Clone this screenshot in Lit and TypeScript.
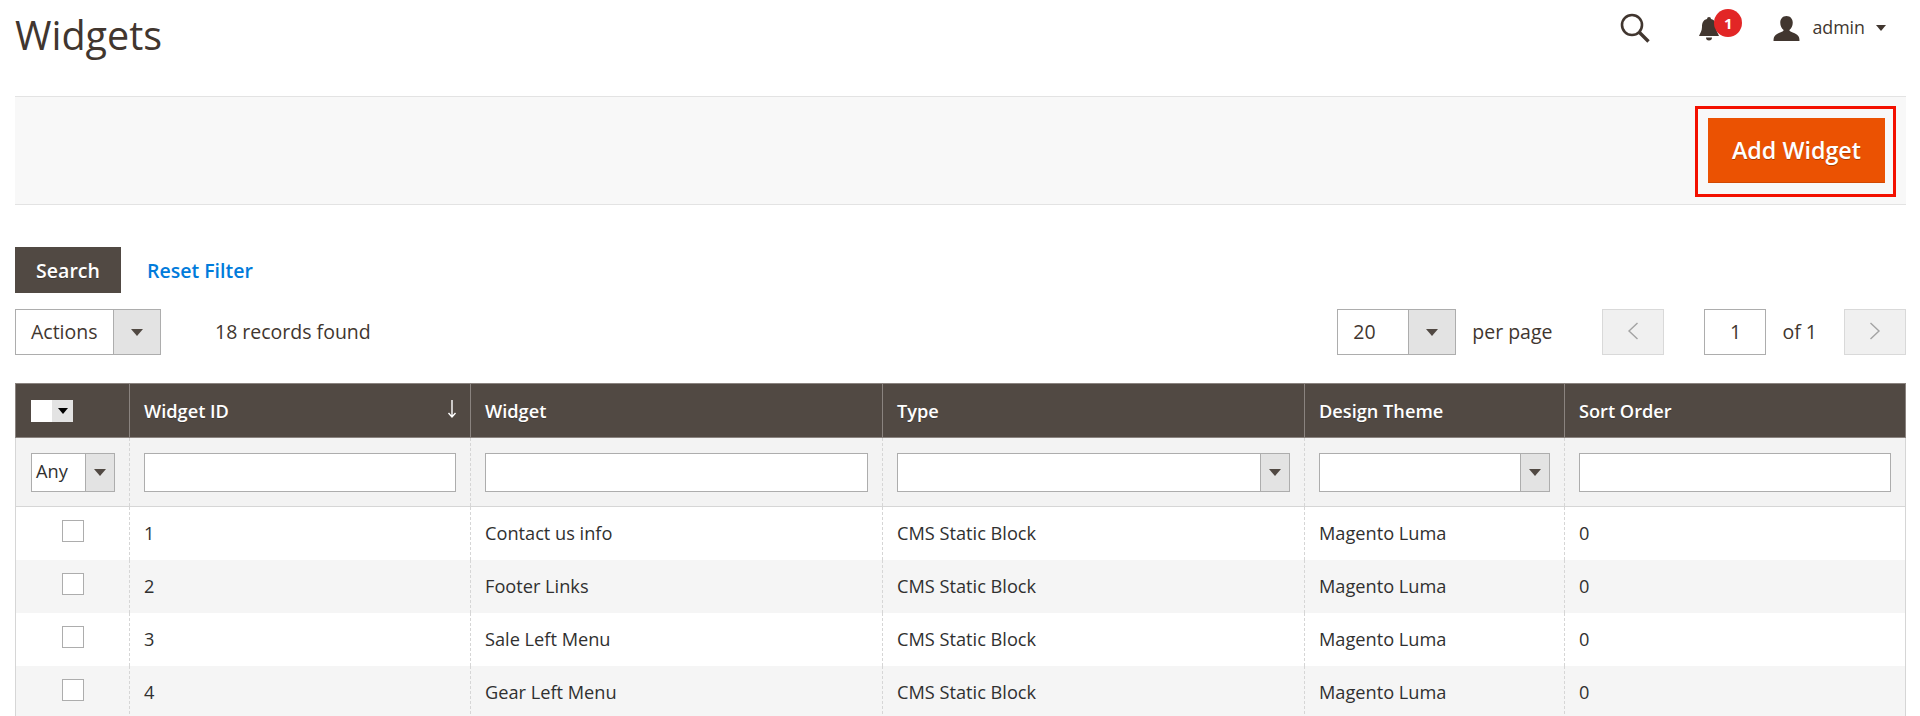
import { LitElement, html, css } from "lit";
import { customElement } from "lit/decorators.js";

const rows = [
  ["1", "Contact us info"],
  ["2", "Footer Links"],
  ["3", "Sale Left Menu"],
  ["4", "Gear Left Menu"],
];

@customElement("app-root")
export class AppRoot extends LitElement {
  static styles = css`
    :host { display: block; height: 716px; overflow: hidden; background: #fff; font-family: "Open Sans", sans-serif; color: #41362f; font-size: 19.5px; padding: 0 14px 0 15px; box-sizing: border-box; }
    .top { display: flex; justify-content: space-between; height: 96px; }
    h1 { margin: 0; font-weight: 400; font-size: 39.5px; line-height: 71px; color: #41362f; }
    .tools { display: flex; align-items: center; height: 56px; }
    .tools svg { display: block; }
    .search { margin-right: 47px; }
    .bell { position: relative; margin-right: 52px; }
    .badge { position: absolute; left: 17px; top: -7px; width: 28px; height: 28px; border-radius: 50%; background: #e22626; color: #fff; font-size: 15px; font-weight: 700; display: flex; align-items: center; justify-content: center; }
    .user { display: flex; align-items: center; margin-right: 20px; font-size: 17.8px; }
    .user span { margin: 0 11px 0 12px; padding-bottom: 2px; }
    .tri { width: 0; height: 0; border: 5px solid transparent; border-top: 6px solid #41362f; border-bottom: 0; }
    .bar { height: 109px; box-sizing: border-box; background: #f8f8f8; border-top: 1px solid #e3e3e3; border-bottom: 1px solid #e3e3e3; display: flex; justify-content: flex-end; align-items: flex-start; padding: 9px 10px 0 0; }
    .hl { border: 3px solid #f31000; padding: 9px 8px 11px 10px; display: flex; }
    .add { background: #eb5202; border: 1px solid #eb5202; border-bottom-color: #d14802; color: #fff; font: 600 23.3px "Open Sans", sans-serif; width: 177px; height: 65px; padding: 0 0 1px; text-shadow: 0 1px 0 rgba(0,0,0,.3); }
    .filters { display: flex; align-items: center; gap: 26px; margin-top: 42px; }
    .search-btn { background: #514943; color: #fff; font: 600 19.5px "Open Sans", sans-serif; border: 0; width: 106px; height: 46px; padding: 0; text-shadow: 0 1px 0 rgba(0,0,0,.3); }
    .reset { color: #007bdb; font-weight: 600; font-size: 19.5px; }
    .tb { display: flex; align-items: center; margin-top: 16px; height: 46px; }
    .sel { display: flex; height: 46px; box-sizing: border-box; border: 1px solid #adadad; background: #fff; align-items: center; }
    .sel .v { flex: 1; padding: 0 0 2px 15px; }
    .sel .arr { align-self: stretch; background: #e3e3e3; border-left: 1px solid #adadad; display: flex; align-items: center; justify-content: center; }
    .arr i { display: block; width: 0; height: 0; border: 6px solid transparent; border-top: 7px solid #514943; border-bottom: 0; }
    .actions { width: 146px; }
    .actions .arr { width: 46px; }
    .found { margin-left: 54px; padding-bottom: 2px; }
    .sp { flex: 1; }
    .pp { width: 119px; }
    .pp .arr { width: 46px; }
    .pl { margin-left: 16px; padding-bottom: 2px; }
    .pg { width: 62px; height: 46px; box-sizing: border-box; border: 1px solid #d9d9d9; background: #f0f0f0; display: flex; align-items: center; justify-content: center; padding-bottom: 2px; }
    .prev { margin-left: 50px; }
    .num { width: 62px; height: 46px; box-sizing: border-box; border: 1px solid #adadad; margin-left: 40px; display: flex; align-items: center; justify-content: center; padding-bottom: 2px; }
    .of { margin-left: 16px; margin-right: 27px; padding-bottom: 2px; }
    table { width: 100%; border-collapse: collapse; table-layout: fixed; margin-top: 28px; font-size: 18.2px; }
    th { background: #514943; color: #fff; font-weight: 600; text-align: left; height: 54px; padding: 0 14px; box-sizing: border-box; border: 1px solid #8a837f; position: relative; text-shadow: 0 1px 0 rgba(0,0,0,.25); }
    th:first-child, .f td:first-child { padding-left: 15px; }
    .f td { background: #f3f3f3; height: 69px; padding: 0 14px; box-sizing: border-box; border-left: 1px dashed #d6d6d6; border-bottom: 1px solid #d6d6d6; color: #303030; }
    .f td:first-child, .r td:first-child { border-left: 1px solid #d6d6d6; }
    .f td:last-child, .r td:last-child { border-right: 1px solid #d6d6d6; }
    .r td { height: 53px; padding: 0 14px; box-sizing: border-box; border-left: 1px dashed #d6d6d6; color: #303030; }
    .r:nth-child(even) td { background: #f5f5f5; }
    .inp { height: 39px; box-sizing: border-box; border: 1px solid #adadad; background: #fff; }
    .f .sel { height: 39px; font-size: 18.2px; }
    .f .arr { width: 28px; }
    .any .v { padding-left: 4px; }
    .cb { display: block; width: 22px; height: 22px; box-sizing: border-box; border: 1px solid #adadad; background: #fff; margin: -5px auto 0; }
    .hsel { display: flex; align-items: center; }
    .hsel b { display: block; width: 21px; height: 22px; background: #fff; }
    .hsel span { width: 21px; height: 22px; background: #e3e3e3; display: flex; align-items: center; justify-content: center; }
    .hsel i { display: block; width: 0; height: 0; border: 5px solid transparent; border-top: 6px solid #000; border-bottom: 0; }
    .sort { position: absolute; right: 13px; top: 15px; }
  `;

  chev(left: boolean) {
    return html`<svg width="12" height="18" viewBox="0 0 12 18" fill="none" stroke="#a3a3a3" stroke-width="1.4"><path d=${left ? "M10.500 1 2 9l8.500 8" : "M1.500 1 10 9l-8.500 8"}/></svg>`;
  }

  render() {
    return html`
      <div class="top">
        <h1>Widgets</h1>
        <div class="tools">
          <svg class="search" width="30" height="30" viewBox="0 0 30 30" fill="none" stroke="#41362f" stroke-width="2.6"><circle cx="12" cy="12" r="10"/><path d="M19.500 19.500 28.500 28.500" stroke-width="3.4"/></svg>
          <div class="bell">
            <svg width="24" height="25" viewBox="0 0 24 25" fill="#41362f"><path d="M12 1a2 2 0 0 1 2 2c4 1 5 4 5 8 0 4 2 6 3 9H2c1-3 3-5 3-9 0-4 1-7 5-8a2 2 0 0 1 2-2zM9 21.500h6a3 3 0 0 1-6 0z"/></svg>
            <span class="badge">1</span>
          </div>
          <div class="user">
            <svg width="27" height="25" viewBox="0 0 28 26" fill="#41362f"><path d="M14 0c4 0 6.500 3 6.500 7 0 3-1.500 6-3.500 7.500 0 2 5 2.500 8 5 2 1.500 2.500 3.500 2.500 6.500H.5c0-3 .5-5 2.500-6.500 3-2.500 8-3 8-5C9 13 7.500 10 7.500 7 7.500 3 10 0 14 0z"/></svg>
            <span>admin</span><i class="tri"></i>
          </div>
        </div>
      </div>
      <div class="bar"><div class="hl"><button class="add">Add Widget</button></div></div>
      <div class="filters"><button class="search-btn">Search</button><span class="reset">Reset Filter</span></div>
      <div class="tb">
        <div class="sel actions"><span class="v">Actions</span><span class="arr"><i></i></span></div>
        <span class="found">18 records found</span>
        <span class="sp"></span>
        <div class="sel pp"><span class="v">20</span><span class="arr"><i></i></span></div>
        <span class="pl">per page</span>
        <div class="pg prev">${this.chev(true)}</div>
        <div class="num">1</div>
        <span class="of">of 1</span>
        <div class="pg">${this.chev(false)}</div>
      </div>
      <table>
        <colgroup><col style="width:114px"/><col style="width:341px"/><col style="width:412px"/><col style="width:422px"/><col style="width:260px"/><col/></colgroup>
        <thead>
          <tr>
            <th><div class="hsel"><b></b><span><i></i></span></div></th>
            <th>Widget ID<svg class="sort" width="10" height="20" viewBox="0 0 10 20" fill="none" stroke="#fff" stroke-width="1.4"><path d="M5 1v17M1.500 14 5 18l3.500-4"/></svg></th>
            <th>Widget</th><th>Type</th><th>Design Theme</th><th>Sort Order</th>
          </tr>
          <tr class="f">
            <td><div class="sel any"><span class="v">Any</span><span class="arr"><i></i></span></div></td>
            <td><div class="inp"></div></td>
            <td><div class="inp"></div></td>
            <td><div class="sel"><span class="v"></span><span class="arr"><i></i></span></div></td>
            <td><div class="sel"><span class="v"></span><span class="arr"><i></i></span></div></td>
            <td><div class="inp"></div></td>
          </tr>
        </thead>
        <tbody>
          ${rows.map(([id, n]) => html`<tr class="r"><td><span class="cb"></span></td><td>${id}</td><td>${n}</td><td>CMS Static Block</td><td>Magento Luma</td><td>0</td></tr>`)}
        </tbody>
      </table>
    `;
  }
}
